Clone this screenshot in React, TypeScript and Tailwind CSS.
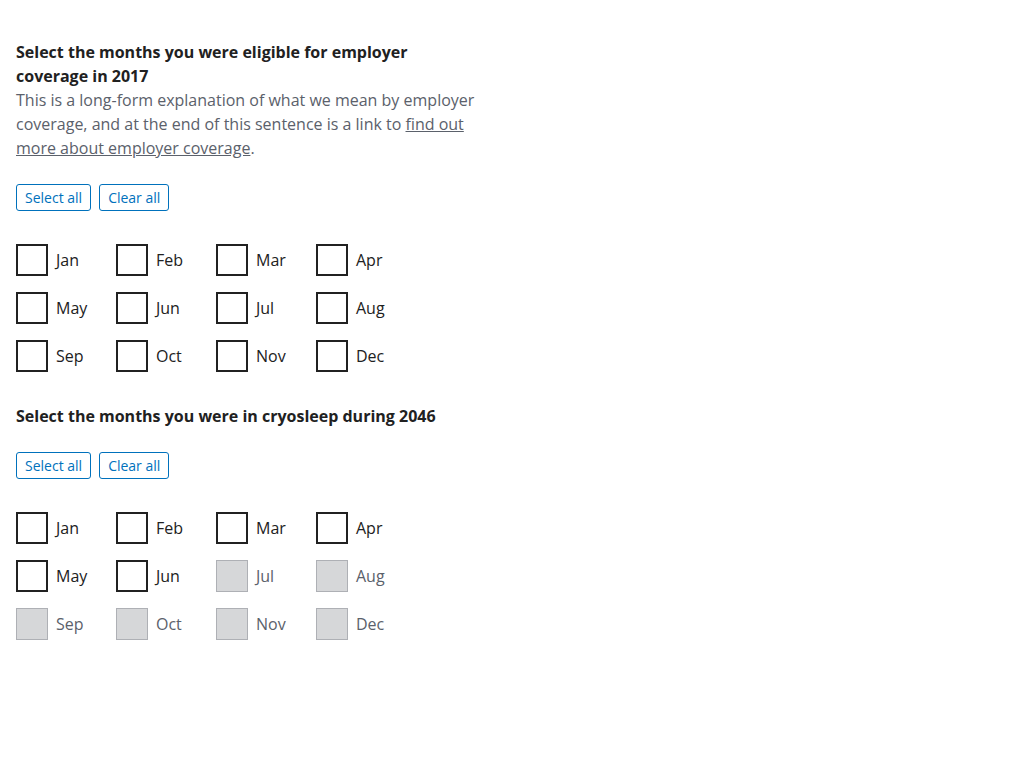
import React from "react";

const months = ["Jan","Feb","Mar","Apr","May","Jun","Jul","Aug","Sep","Oct","Nov","Dec"];

function MonthGrid({ disabledFrom }: { disabledFrom?: number }) {
  return (
    <div className="mt-[33px] grid grid-cols-[100px_100px_100px_100px] gap-y-4">
      {months.map((m, i) => {
        const disabled = disabledFrom !== undefined && i >= disabledFrom;
        return (
          <label key={m} className="flex items-center gap-2 h-8">
            <span
              className={
                disabled
                  ? "w-8 h-8 box-border border border-[#aeb0b5] bg-[#d6d7d9]"
                  : "w-8 h-8 box-border border-2 border-[#212121] bg-white"
              }
            />
            <span className={disabled ? "text-[16px] text-[#5b616b]" : "text-[16px] text-[#212121]"}>{m}</span>
          </label>
        );
      })}
    </div>
  );
}

function Buttons() {
  return (
    <div className="flex gap-2">
      <button className="h-[27px] px-2 border border-[#0071bc] rounded-[3px] text-[#0071bc] text-[14px] leading-[21px] bg-white">Select all</button>
      <button className="h-[27px] px-2 border border-[#0071bc] rounded-[3px] text-[#0071bc] text-[14px] leading-[21px] bg-white">Clear all</button>
    </div>
  );
}

export default function App() {
  return (
    <div className="min-h-[768px] bg-white px-4 pt-10" style={{ fontFamily: '"Open Sans", sans-serif' }}>
      <div className="w-[466px] leading-6 text-[16px]">
        <div className="font-bold text-[#212121]">Select the months you were eligible for employer coverage in 2017</div>
        <p className="text-[#5b616b]">
          This is a long-form explanation of what we mean by employer coverage, and at the end of this sentence is a link to{" "}
          <a className="underline text-[#5b616b]" href="#">find out more about employer coverage</a>.
        </p>
        <div className="mt-6">
          <Buttons />
        </div>
      </div>
      <MonthGrid />
      <div className="mt-8 font-bold text-[#212121] text-[16px] leading-6">Select the months you were in cryosleep during 2046</div>
      <div className="mt-6">
        <Buttons />
      </div>
      <MonthGrid disabledFrom={6} />
    </div>
  );
}
